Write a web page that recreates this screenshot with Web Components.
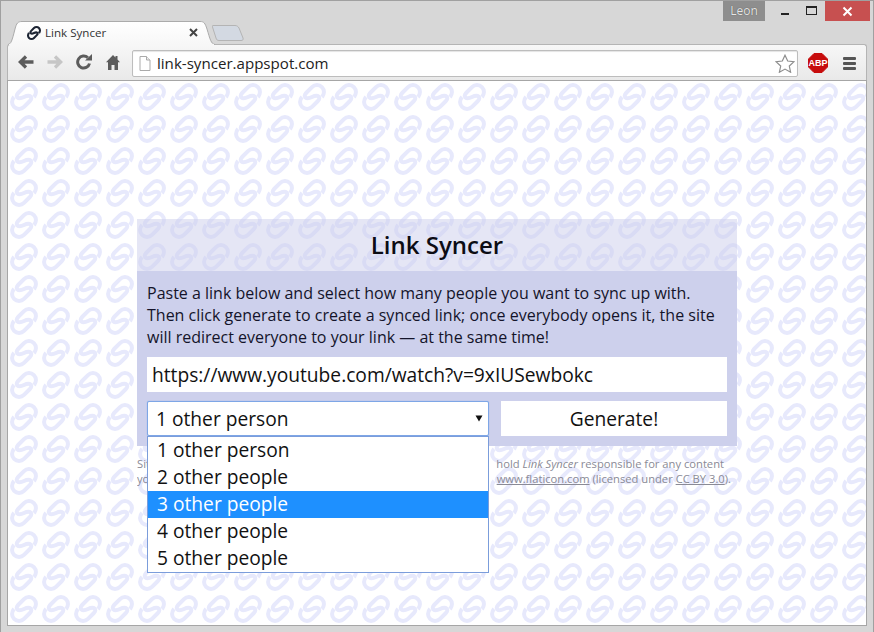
<!DOCTYPE html>
<html lang="en">
<head>
<meta charset="utf-8">
<title>Link Syncer</title>
<style>
html,body{margin:0;padding:0;height:100%;overflow:hidden}
body{font-family:"Open Sans",sans-serif}
browser-window{height:632px}
</style>
</head>
<body>
<browser-window>
  <syncer-card></syncer-card>
</browser-window>
<script>
const LINK=`<g fill="none" stroke-linecap="round" transform="translate(16 16) rotate(-45)"><path d="M8 7H7A7 7 0 0 0 7-7H-1C-6.500-7-6.500-2.200 0 0 6.500 2.200 6.500 7 1 7H-7A7 7 0 0 1-7-7H-8"/></g>`;
function el(name,css,html,init){
  customElements.define(name,class extends HTMLElement{
    constructor(){super();const s=this.attachShadow({mode:"open"});s.innerHTML=`<style>${css}</style>${html}`;if(init)init(this,s)}
  });
}
const tile="data:image/svg+xml,"+encodeURIComponent(`<svg xmlns="http://www.w3.org/2000/svg" width="32" height="32"><g stroke="#e7e9fc" stroke-width="4">${LINK}</g></svg>`);

el("window-controls",`
:host{display:flex;height:20px;margin-left:auto;margin-right:3px;align-items:stretch}
.user{width:42px;background:#8e8e8e;color:#e6e6e6;font:12px/20px "Open Sans",sans-serif;text-align:center;text-shadow:0 0 1px #444}
.b{width:27px;display:flex;align-items:center;justify-content:center}
.b.min{margin-left:6px}
.b.close{width:45px;background:#c75050}
svg{display:block}
`,`<div class="user">Leon</div>
<div class="b min"><svg width="10" height="10"><rect x="1" y="7" width="8" height="2" fill="#222"/></svg></div>
<div class="b"><svg width="12" height="10"><rect x=".5" y=".5" width="10" height="8" fill="none" stroke="#222"/><rect x="0" y="0" width="11" height="2" fill="#222"/></svg></div>
<div class="b close"><svg width="11" height="11" viewBox="0 0 11 11"><path d="M1.500 1.500l8 8M9.500 1.500l-8 8" stroke="#fff" stroke-width="2"/></svg></div>`);

el("browser-tab",`
:host{display:flex;align-items:center;position:relative;width:207px;height:24px;box-sizing:border-box;padding:1px 0 0 18px;margin-left:2px}
svg.bg{position:absolute;left:0;top:0}
.fav,.t,.x{position:relative}
.fav{margin-right:3px}
.t{font:11.600px/16px "Open Sans",sans-serif;color:#333;flex:1;margin-top:1px}
.x{margin-right:17px}
`,`<svg class="bg" width="207" height="25" viewBox="0 0 207 25"><defs><linearGradient id="g" x1="0" y1="0" x2="0" y2="1"><stop offset="0" stop-color="#fff"/><stop offset="1" stop-color="#f7f7f7"/></linearGradient></defs><path d="M0 24.500C3 24 4 21 7 9 8.500 3 10 1.500 14 1.500H192C196 1.500 197 3 199 9 202 19 203 24 207 24.500V25H0Z" fill="url(#g)" stroke="#ababab" stroke-width="1"/><rect x="1" y="24" width="205" height="1" fill="#f7f7f7"/></svg>
<svg class="fav" width="16" height="16" viewBox="0 0 32 32"><g stroke="#1c2433" stroke-width="4.200">${LINK}</g></svg><span class="t">Link Syncer</span>
<svg class="x" width="9" height="9" viewBox="0 0 9 9"><path d="M1 1l7 7M8 1L1 8" stroke="#444" stroke-width="2"/></svg>`);

el("new-tab-button",`:host{display:block;margin:5px 0 0 -3px;width:32px;height:16px}svg{display:block}`,
`<svg width="32" height="16"><path d="M1 .5H23C25 .5 26 1.500 27 3L31 13C31.500 14.500 31 15.500 29 15.500H7C5 15.500 4.500 14.500 4 13L.8 3C.4 1.500 0 .5 1 .5Z" fill="#d3d9e2" stroke="#b4b4b4"/></svg>`);

el("url-bar",`
:host{display:flex;align-items:center;flex:1;height:27px;box-sizing:border-box;border:1px solid #bdbdbd;border-radius:2px;background:#fff;margin:0 10px 0 0;padding:0 2px 0 6px;box-shadow:inset 0 1px 1px #e4e4e4}
.d{margin-right:6px;display:block}
.u{flex:1;font:15.100px/20px "Open Sans",sans-serif;color:#222;white-space:nowrap}
`,`<svg class="d" width="12" height="15" viewBox="0 0 12 15"><path d="M1 .5H7.500L11 4V14.500H1Z" fill="#fff" stroke="#aaa"/><path d="M7.500 .5V4H11" fill="#eee" stroke="#aaa"/></svg>
<span class="u">link-syncer.appspot.com</span>
<svg width="20" height="19" viewBox="0 0 20 19"><path d="M10 1.200l2.700 5.800 6.300.7-4.700 4.300 1.300 6.200L10 15.100l-5.600 3.100 1.300-6.200L1 7.700l6.300-.7z" fill="#fff" stroke="#8d8d8d" stroke-width="1.200"/></svg>`);

el("browser-toolbar",`
:host{display:flex;align-items:center;height:36px;box-sizing:border-box;padding:1px 10px 0 10px;background:linear-gradient(#f7f7f7,#e9e9e9);border:1px solid #b4b4b4;border-bottom:0;border-radius:3px 3px 0 0}
.i{display:block;flex:none}
.n{margin-bottom:2px}
.abp{margin-right:15px;overflow:visible}
`,`<svg class="i n" style="margin-right:13px" width="16" height="14" viewBox="0 0 16 14"><path d="M15.500 7H3M8 1.500L2.300 7 8 12.500" fill="none" stroke="#5c5c5c" stroke-width="3.300"/></svg>
<svg class="i n" style="margin-right:13px" width="16" height="14" viewBox="0 0 16 14"><path d="M.5 7H13M8 1.500L13.700 7 8 12.500" fill="none" stroke="#c6c6c6" stroke-width="3.300"/></svg>
<svg class="i n" style="margin-right:14px" width="16" height="16" viewBox="0 0 16 16"><path d="M13.500 9.500A6 6 0 1 1 11.800 3.700" fill="none" stroke="#5c5c5c" stroke-width="3"/><path d="M9 6.500H16V0Z" fill="#5c5c5c"/></svg>
<svg class="i n" style="margin-right:12px" width="14" height="15" viewBox="0 0 14 15"><path d="M7 0L0 7.200H2V15H5.500V10H8.500V15H12V7.200H14L11.500 4.500V1H9.500V2.500Z" fill="#5c5c5c"/></svg>
<url-bar></url-bar>
<svg class="i abp" width="20" height="20" viewBox="0 0 20 20"><path d="M6 .5H14L19.500 6V14L14 19.500H6L.5 14V6Z" fill="#c70d0d" stroke="#c70d0d"/><text x="10" y="13.400" text-anchor="middle" font-family="Liberation Sans,sans-serif" font-weight="700" font-size="9" fill="#fff">ABP</text></svg>
<svg class="i" width="13" height="13"><g fill="#555"><rect width="13" height="3" rx="1"/><rect y="5" width="13" height="3" rx="1"/><rect y="10" width="13" height="3" rx="1"/></g></svg>`);

el("browser-window",`
:host{display:flex;flex-direction:column;box-sizing:border-box;width:874px;background:#d7d7d7;border:1px solid #a0a0a0;border-bottom:0;padding:0 6px 0 6px;height:632px}
.tbar{display:flex;height:19px;margin:0 -6px 0 -6px}
.tabs{display:flex;height:24px;margin-left:-1px;position:relative;z-index:1;align-items:flex-start}
.page{flex:none;height:546px;display:flex;flex-direction:column;align-items:center;justify-content:center;background:#fff url("${tile}") 0 0/32px 32px;border:1px solid #a6a6a6;box-sizing:border-box}
`,`<div class="tbar"><window-controls></window-controls></div>
<div class="tabs"><browser-tab></browser-tab><new-tab-button></new-tab-button></div>
<browser-toolbar></browser-toolbar>
<div class="page"><slot></slot></div>`);

el("select-open",`
:host{display:block;position:relative;flex:0 0 342px;height:35px;font:19.200px/27px "Open Sans",sans-serif;color:#111}
.s{height:35px;box-sizing:border-box;background:#fff;border:1px solid #7ea6e6;box-shadow:0 0 1px #7ea6e6;border-radius:2px;display:flex;align-items:center;padding:0 5px 0 8px}
.s span{flex:1}
.menu{position:absolute;left:0;right:0;top:35px;box-sizing:border-box;background:#fff;border:1px solid #7b9ddb;z-index:2}
.o{height:27px;line-height:25px;padding-left:9px;white-space:nowrap}
.o.h{background:#1e90ff;color:#fff}
svg{display:block}
`,`<div class="s"><span>1 other person</span><svg width="8" height="8"><path d="M.5 1.500H7.500L4 7.500Z" fill="#111"/></svg></div>
<div class="menu"><div class="o">1 other person</div><div class="o">2 other people</div><div class="o h">3 other people</div><div class="o">4 other people</div><div class="o">5 other people</div></div>`);

el("syncer-card",`
:host{display:block;width:600px;font-family:"Open Sans",sans-serif;color:#111}
h1{margin:0;height:52px;font:600 24px/52px "Open Sans",sans-serif;text-align:center;color:#0c0c14;background:rgba(205,208,236,.52)}
.body{background:#cdd0ec;padding:10px;display:flex;flex-direction:column;gap:9px}
p{margin:1px 0 0 0;font:16px/22px "Open Sans",sans-serif;color:#14142a}
.url{height:35px;background:#fff;font:19.200px/35px "Open Sans",sans-serif;padding-left:5px;white-space:nowrap;overflow:hidden}
.row{display:flex;gap:12px}
.btn{flex:1;height:35px;background:#fff;text-align:center;font:19.200px/35px "Open Sans",sans-serif}
.fine{font:11.200px/15px "Open Sans",sans-serif;color:#8a8a96;margin:10px 0 0 0;height:32px}
.l{display:flex;white-space:nowrap}
.l .a{flex:1;min-width:0;overflow:hidden}
.l.one{padding-right:13px}
.l.two{padding-right:6px}
a{color:inherit}
`,`<h1>Link Syncer</h1>
<div class="body">
<p>Paste a link below and select how many people you want to sync up with. Then click generate to create a synced link; once everybody opens it, the site will redirect everyone to your link — at the same time!</p>
<div class="url">https://www.youtube.com/watch?v=9xIUSewbokc</div>
<div class="row"><select-open></select-open><div class="btn">Generate!</div></div>
</div>
<div class="fine"><div class="l one"><span class="a">Site made for fun and provided as is; please do not</span><span>hold <i>Link Syncer</i> responsible for any content</span></div>
<div class="l two"><span class="a">you end up being redirected to. The icon is from</span><span><a href="#">www.flaticon.com</a> (licensed under <a href="#">CC BY 3.0</a>).</span></div></div>`);
</script>
</body>
</html>
